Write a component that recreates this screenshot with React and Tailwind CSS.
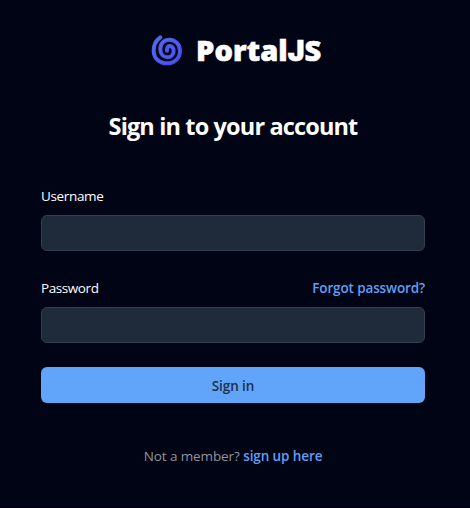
function Swirl() {
  return (
    <svg className="h-[34px] w-[34px] shrink-0" viewBox="0 0 102 102" fill="none" strokeLinecap="round" strokeLinejoin="round" aria-hidden="true">
      <defs>
        <linearGradient id="swirl" x1="0" y1="0" x2="1" y2="1">
          <stop offset="0" stopColor="#4f68ed" />
          <stop offset="1" stopColor="#4048e8" />
        </linearGradient>
      </defs>
      <path
        d="M31 13C18 22 11 36 11 53C11 75 28 91 50 91C73 91 90 76 90 54C90 34 76 20 58 20C42 20 31 32 31 48C31 63 40 73 52 73C64 73 71 64 71 53C71 44 65 38 58 39C52 40 51 46 51 53"
        stroke="url(#swirl)"
        strokeWidth="12"
      />
      <path
        d="M29 14C17 23 10 36 10 53C10 75 28 90 50 90C73 90 89 76 89 54C89 34 76 19 58 19C42 19 30 32 30 48C30 63 40 72 52 72C64 72 70 64 70 53C70 44 65 37 58 38"
        stroke="#6675fa"
        strokeWidth="3"
        opacity="0.45"
      />
    </svg>
  );
}

const inputClass = "block h-9 w-full rounded-md border border-[#343f4e] bg-[#1f2a3a] px-3 text-sm text-white outline-none";

export default function App() {
  return (
    <main className="flex h-[508px] w-full flex-col border-b border-black bg-[#010414] px-[41px] pr-[45px] font-['Open_Sans','Noto_Sans',sans-serif] text-[13.5px] text-white">
      <header className="mt-[33px] flex h-[34px] items-center pl-[109px]">
        <Swirl />
        <span className="ml-3 font-['Noto_Sans','Open_Sans',sans-serif] text-[29px] leading-[34px] font-black tracking-[0.1px] whitespace-nowrap [-webkit-text-stroke:0.6px_white]">
          Portal<span className="font-['Inter','Noto_Sans',sans-serif] text-[28px]">J</span>S
        </span>
      </header>
      <h1 className="mt-[43px] text-center text-[23.5px] leading-8 font-bold tracking-[-0.86px] whitespace-nowrap">Sign in to your account</h1>
      <form className="mt-[42px]">
        <label htmlFor="username" className="block h-6 leading-6 tracking-[-0.35px]">Username</label>
        <input id="username" className={`${inputClass} mt-[7px]`} />
        <div className="mt-[25px] flex h-6 items-center justify-between leading-6">
          <label htmlFor="password" className="tracking-[-0.42px]">Password</label>
          <a className="font-semibold tracking-[-0.13px] text-[#609ff5]">Forgot password?</a>
        </div>
        <input id="password" type="password" className={`${inputClass} mt-[7px]`} />
        <button type="button" className="mt-6 block h-9 w-full rounded-md bg-[#60a5fa] pt-0.5 font-semibold tracking-[-0.1px] text-[#1e2f4b]">Sign in</button>
      </form>
      <p className="mt-[41px] text-center leading-6 tracking-[-0.1px] text-[#9095a0]">
        Not a member? <a className="font-semibold tracking-[-0.1px] text-[#609ff5]">sign up here</a>
      </p>
    </main>
  );
}
